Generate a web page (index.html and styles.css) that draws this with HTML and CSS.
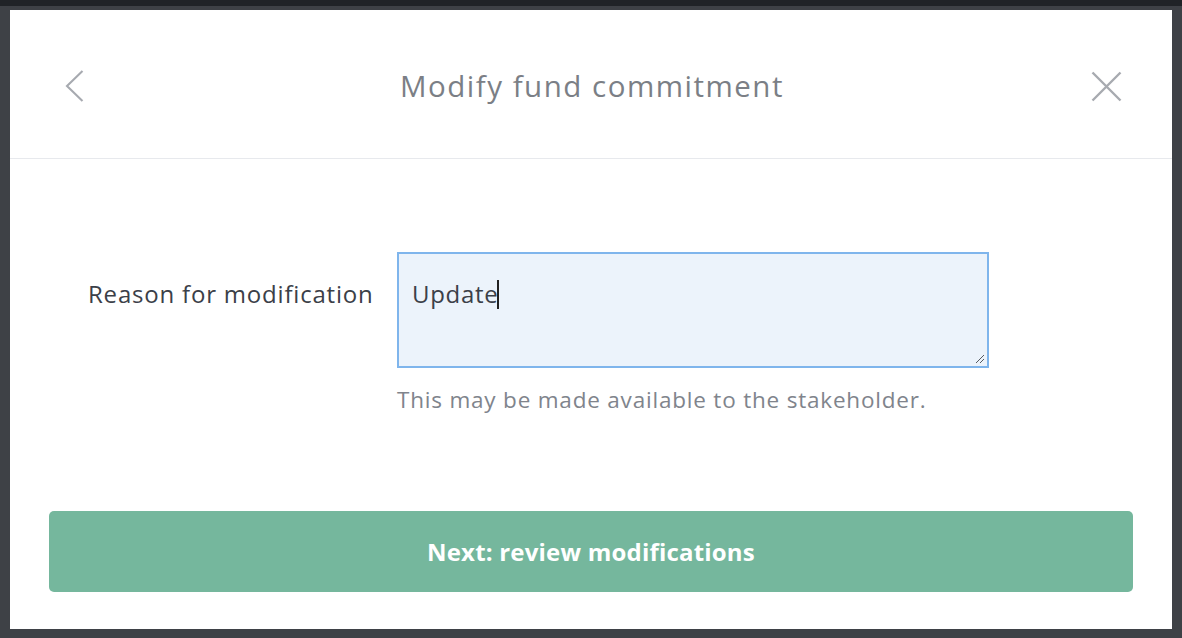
FILE: index.html
```html
<!DOCTYPE html>
<html>
<head>
<meta charset="utf-8">
<link rel="stylesheet" href="styles.css">
</head>
<body>
<div class="topstrip"></div>
<div class="frame">
  <div class="modal">
    <div class="header">
      <button class="icon-btn back" aria-label="Back">
        <svg width="20" height="32" viewBox="0 0 20 32"><path d="M18.5 1 L3 16 L18.5 31" fill="none" stroke="#a7aab0" stroke-width="2.1"/></svg>
      </button>
      <h1 class="title">Modify fund commitment</h1>
      <button class="icon-btn close" aria-label="Close">
        <svg width="31" height="31" viewBox="0 0 31 31"><path d="M1.5 1.5 L29.5 29.5 M29.5 1.5 L1.5 29.5" fill="none" stroke="#a7aab0" stroke-width="2.4"/></svg>
      </button>
    </div>
    <div class="content">
      <div class="field-row">
        <label class="label">Reason for modification</label>
        <div class="field">
          <div class="textarea"><span>Update</span><span class="caret"></span>
            <svg class="grip" width="12" height="12" viewBox="0 0 12 12"><path d="M11 3 L3 11 M11 7 L7 11" stroke="#555a60" stroke-width="1"/></svg>
          </div>
          <p class="help">This may be made available to the stakeholder.</p>
        </div>
      </div>
      <button class="primary">Next: review modifications</button>
    </div>
  </div>
</div>
</body>
</html>
```
FILE: styles.css
```css
html, body {
  margin: 0;
  padding: 0;
  width: 1182px;
  height: 638px;
  overflow: hidden;
  background: #3e4146;
  font-family: "Open Sans", "Noto Sans", sans-serif;
}
.topstrip {
  height: 6px;
  background: #202327;
}
.frame {
  padding: 4px 10px 9px 10px;
  height: 632px;
  box-sizing: border-box;
}
.modal {
  background: #ffffff;
  height: 100%;
  display: flex;
  flex-direction: column;
}
.header {
  height: 144px;
  padding: 4px 50px 0 54px;
  border-bottom: 1px solid #e7e9ed;
  display: flex;
  align-items: center;
  justify-content: space-between;
}
.icon-btn {
  background: none;
  border: 0;
  padding: 0;
  display: flex;
  height: 32px;
  align-items: center;
}
.back { width: 32px; justify-content: flex-start; }
.close { width: 34px; justify-content: flex-end; }
.title {
  margin: 0 0 2px 0;
  font-weight: 400;
  font-size: 29.5px;
  letter-spacing: 1.5px;
  color: #7b7f86;
}
.content {
  padding: 93px 39px 0 39px;
  display: flex;
  flex-direction: column;
}
.field-row {
  display: flex;
  align-items: flex-start;
}
.label {
  width: 348px;
  box-sizing: border-box;
  padding: 25px 0 0 39px;
  font-size: 24px;
  letter-spacing: 0.8px;
  color: #3b4048;
}
.field {
  display: flex;
  flex-direction: column;
}
.textarea {
  width: 592px;
  height: 116px;
  box-sizing: border-box;
  border: 2px solid #7fb5ec;
  background: #ecf3fb;
  padding: 23px 13px;
  font-size: 24px;
  letter-spacing: 0.7px;
  color: #3b4048;
  position: relative;
  display: flex;
  align-items: flex-start;
}
.caret {
  display: inline-block;
  width: 1.5px;
  height: 29px;
  background: #222;
  margin: 3px 0 0 -1px;
}
.grip {
  position: absolute;
  right: 2px;
  bottom: 2px;
}
.help {
  margin: 16px 0 0 0;
  font-size: 22.5px;
  letter-spacing: 0.8px;
  color: #80848c;
}
.primary {
  margin-top: 96px;
  height: 81px;
  border: 0;
  border-radius: 5px;
  background: #75b79d;
  color: #fff;
  font-family: "Open Sans", "Noto Sans", sans-serif;
  font-weight: 700;
  font-size: 24px;
  letter-spacing: 0.2px;
}
```
